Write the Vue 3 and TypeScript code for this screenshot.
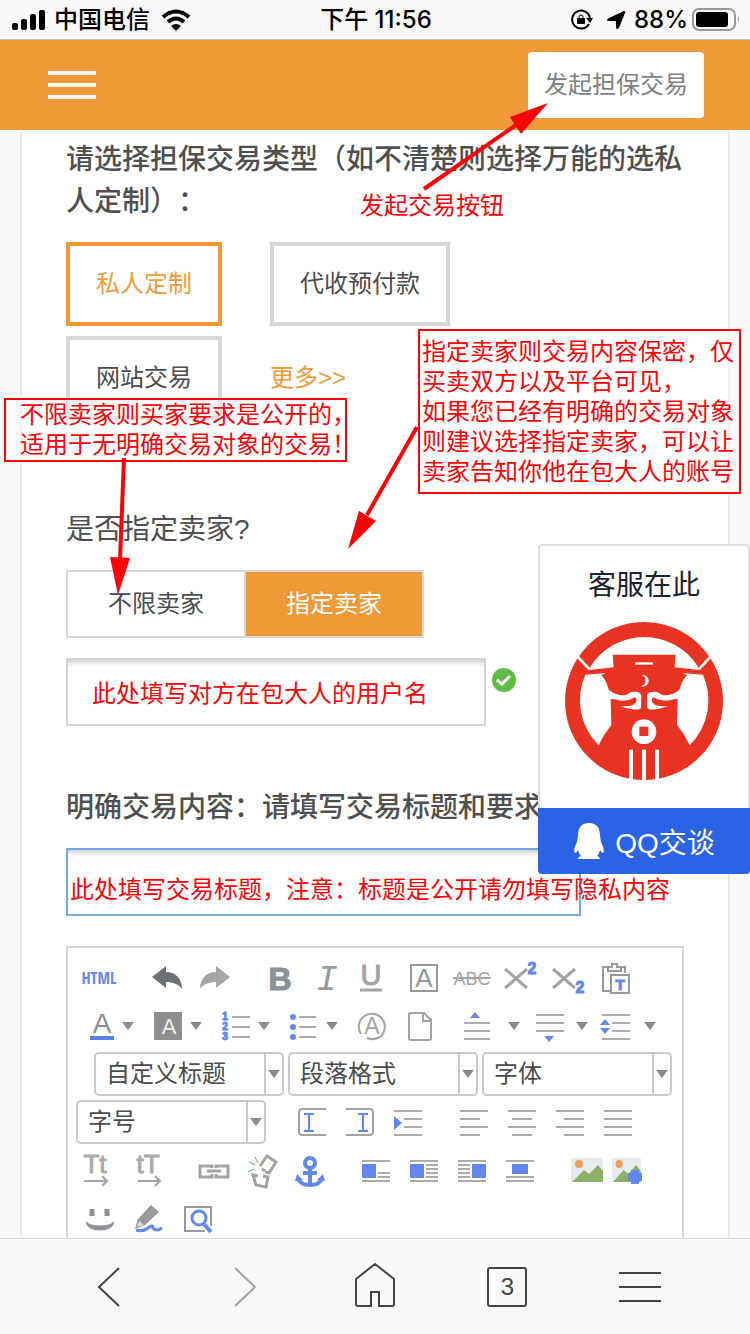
<script setup lang="ts">
import { ref } from 'vue'

interface Tool {
  kind: 'icon' | 'split' | 'select' | 'sep'
  icon?: string
  label?: string
}

const icon = (name: string, label: string): Tool => ({ kind: 'icon', icon: name, label })
const split = (name: string, label: string): Tool => ({ kind: 'split', icon: name, label })
const select = (label: string): Tool => ({ kind: 'select', label })
const sep: Tool = { kind: 'sep' }

const toolRows: Tool[][] = [
  [
    icon('html', '源代码'), sep, icon('undo', '撤销'), icon('redo', '重做'), sep,
    icon('bold', '加粗'), icon('italic', '斜体'), icon('underline', '下划线'), icon('border', '字符边框'),
    icon('strike', '删除线'), icon('sup', '上标'), icon('sub', '下标'), icon('paste', '纯文本粘贴'),
  ],
  [
    split('color', '字体颜色'), split('back', '背景色'), split('ol', '有序列表'), split('ul', '无序列表'),
    icon('clear', '清除格式'), icon('page', '清空文档'), sep,
    split('before', '段前距'), split('after', '段后距'), split('line', '行间距'),
  ],
  [sep, select('自定义标题'), select('段落格式'), select('字体')],
  [
    select('字号'), sep, icon('ltr', '从左向右输入'), icon('rtl', '从右向左输入'), icon('indent', '首行缩进'), sep,
    icon('left', '居左对齐'), icon('center', '居中对齐'), icon('right', '居右对齐'), icon('justify', '两端对齐'),
  ],
  [
    icon('upper', '字母大写'), icon('lower', '字母小写'), sep,
    icon('link', '超链接'), icon('unlink', '取消链接'), icon('anchor', '锚点'), sep,
    icon('imgnone', '默认'), icon('imgleft', '左浮动'), icon('imgright', '右浮动'), icon('imgcenter', '图片居中'), sep,
    icon('image', '单图上传'), icon('images', '多图上传'),
  ],
  [icon('smile', '表情'), icon('scrawl', '涂鸦'), icon('search', '查询替换')],
]

const G = '#a3a3a3'
const B = '#6288ee'
const hl = (y: number, a: number, b: number) => `M${a} ${y}H${b}`
const rules = (d: string) => `<path d="${d}" stroke="#acacac" stroke-width="2" fill="none"/>`
const tx = (s: string, x: number, y: number, size: number, fill: string, extra = '') =>
  `<text x="${x}" y="${y}" font-size="${size}" fill="${fill}" text-anchor="middle" ${extra}>${s}</text>`

const scenery =
  '<path d="M0 0H32V24H0Z" fill="#e6ebf0"/><circle cx="8" cy="6" r="4" fill="#eb9d5c"/><path d="M1 24L13 12L18 16L27 7L32 13V24Z" fill="#8db067"/>'

const icons: Record<string, string> = {
  html: tx('HTML', 23, 30, 16, B, 'class="narrow"'),
  undo: '<path d="M10 23L24 12V18C34 18 40 25 40 35C36 30 31 28 24 28V34Z" fill="#6d7076"/>',
  redo: '<path d="M40 23L26 12V18C16 18 10 25 10 35C14 30 19 28 26 28V34Z" fill="#a5a5a5"/>',
  bold: tx('B', 24, 36, 32, '#8d9096', 'font-weight="700" stroke="#8d9096"'),
  italic: tx('I', 23, 36, 36, '#9b9b9b', 'class="slab" font-style="italic"'),
  underline: tx('U', 19, 31, 29, G, 'stroke="#a3a3a3"') + '<path d="M8 36H30" stroke="#a3a3a3" stroke-width="3"/>',
  border: '<rect x="11" y="11" width="26" height="26" fill="none" stroke="#999" stroke-width="2"/>' + tx('A', 24, 33, 26, '#969696'),
  strike: tx('ABC', 24, 31, 18, G) + '<path d="M5 24H43" stroke="#a3a3a3" stroke-width="2"/>',
  sup: '<path d="M9 15L31 34M31 15L9 34" stroke="#a3a3a3" stroke-width="3"/>' + tx('2', 36, 20, 16, B, 'font-weight="700" stroke="#6288ee"'),
  sub: '<path d="M9 15L31 34M31 15L9 34" stroke="#a3a3a3" stroke-width="3"/>' + tx('2', 36, 39, 16, B, 'font-weight="700" stroke="#6288ee"'),
  paste: `<path d="M17 13H11V37H18M28 13H33V19M16 17H29V13H25V10H20V13H16Z" fill="none" stroke="#999" stroke-width="2"/><rect x="19" y="21" width="18" height="18" fill="#fff" stroke="#999" stroke-width="2"/>${tx('T', 28, 36, 15, B, 'font-weight="700" stroke="#6288ee"')}`,
  color: tx('A', 26, 31, 28, '#8e8e8e') + '<path d="M14 36H38" stroke="#5580ee" stroke-width="4"/>',
  back: '<rect x="10" y="10" width="28" height="28" fill="#8e8e8e"/>' + tx('A', 25, 32, 22, '#eee'),
  ol: tx('1', 13, 18, 10, B, 'font-weight="700" stroke="#6288ee"') + tx('2', 13, 28, 10, B, 'font-weight="700" stroke="#6288ee"') + tx('3', 13, 38, 10, B, 'font-weight="700" stroke="#6288ee"') + rules(hl(15, 20, 38) + hl(25, 20, 38) + hl(35, 20, 38)),
  ul: `<g fill="${B}"><circle cx="13" cy="15" r="3"/><circle cx="13" cy="25" r="3"/><circle cx="13" cy="35" r="3"/></g>` + rules(hl(15, 19, 36) + hl(25, 19, 36) + hl(35, 19, 36)),
  clear: '<path d="M13 32A13 13 0 1 1 33 34M33 34Q27 39 19 36" fill="none" stroke="#a3a3a3" stroke-width="2"/>' + tx('A', 24, 32, 23, G),
  page: '<path d="M15 11H28L35 18V36Q35 38 33 38H15Q13 38 13 36V13Q13 11 15 11ZM27 11V19H35" fill="none" stroke="#a3a3a3" stroke-width="2"/>',
  before: `<path d="M13 10L18 16H8Z" fill="${B}"/>` + rules(hl(21, 2, 28) + hl(29, 2, 28) + hl(37, 2, 28)),
  after: `<path d="M19 40L24 34H14Z" fill="${B}"/>` + rules(hl(13, 6, 34) + hl(21, 6, 34) + hl(29, 6, 34)),
  line: `<path d="M7 17L12 23H2ZM7 32L12 26H2Z" fill="${B}"/>` + rules(hl(13, 4, 32) + hl(21, 14, 32) + hl(29, 14, 32) + hl(37, 4, 32)),
  ltr: `<path d="M38 11H14Q11 11 11 14V34Q11 37 14 37H38" fill="none" stroke="#a3a3a3" stroke-width="2"/><path d="M16 16H26M21 16V33M16 33H26" stroke="${B}" stroke-width="2"/>`,
  rtl: `<path d="M10 11H34Q37 11 37 14V34Q37 37 34 37H10" fill="none" stroke="#a3a3a3" stroke-width="2"/><path d="M22 16H32M27 16V33M22 33H32" stroke="${B}" stroke-width="2"/>`,
  indent: `<path d="M10 18L18 25L10 32Z" fill="${B}"/>` + rules(hl(13, 10, 38) + hl(21, 20, 38) + hl(29, 20, 38) + hl(37, 10, 38)),
  left: rules(hl(13, 10, 38) + hl(21, 10, 30) + hl(29, 10, 38) + hl(37, 10, 30)),
  center: rules(hl(13, 10, 38) + hl(21, 14, 34) + hl(29, 10, 38) + hl(37, 14, 34)),
  right: rules(hl(13, 10, 38) + hl(21, 18, 38) + hl(29, 10, 38) + hl(37, 18, 38)),
  justify: rules(hl(13, 10, 38) + hl(21, 10, 38) + hl(29, 10, 38) + hl(37, 10, 38)),
  upper: tx('Tt', 19, 27, 26, '#aaa', 'stroke="#aaa"') + '<path d="M8 35H31M26 30L31 35L26 40" fill="none" stroke="#a3a3a3" stroke-width="2"/>',
  lower: tx('tT', 24, 27, 26, '#aaa', 'stroke="#aaa"') + '<path d="M14 35H36M31 30L36 35L31 40" fill="none" stroke="#a3a3a3" stroke-width="2"/>',
  link: '<path d="M22 22V20H10V31H22V28M26 22V20H38V31H26V28M17 25H31" fill="none" stroke="#a3a3a3" stroke-width="3"/>',
  unlink: `<g fill="none" stroke="#a3a3a3" stroke-width="3"><path d="M22 20L29 10L38 16L31 27L27 26M24 23L27 25"/><path d="M20 30L15 29L18 39L28 41L30 31L25 30"/></g><path d="M17 11L20 17M11 16L17 19M10 26L16 23" stroke="${B}" stroke-width="1"/>`,
  anchor: `<g fill="none" stroke="${B}" stroke-width="4"><circle cx="24" cy="17" r="5"/><path d="M24 22V39M17 27H31M12 32Q14 39 24 39Q34 39 36 32"/></g><path d="M9 35L11 28L17 34ZM39 35L37 28L31 34Z" fill="${B}"/>`,
  imgnone: `<rect x="10" y="18" width="14" height="14" fill="${B}"/>` + rules(hl(15, 10, 38) + hl(27, 26, 38) + hl(31, 26, 38) + hl(35, 10, 38)),
  imgleft: `<rect x="10" y="18" width="14" height="14" fill="${B}"/>` + rules(hl(15, 10, 38) + hl(19, 26, 38) + hl(23, 26, 38) + hl(27, 26, 38) + hl(31, 26, 38) + hl(35, 10, 38)),
  imgright: `<rect x="24" y="18" width="14" height="14" fill="${B}"/>` + rules(hl(15, 10, 38) + hl(19, 10, 22) + hl(23, 10, 22) + hl(27, 10, 22) + hl(31, 10, 22) + hl(35, 10, 38)),
  imgcenter: `<rect x="16" y="18" width="16" height="10" fill="${B}"/>` + rules(hl(15, 10, 38) + hl(31, 10, 38) + hl(35, 10, 38)),
  image: `<g transform="translate(9 12)">${scenery}</g>`,
  images: `<g transform="translate(2 12) scale(.9 1)">${scenery}</g><path d="M21 24H29V27H32V35H29V38H21V35H18V27H21Z" fill="${B}"/>`,
  smile: '<path d="M16 15V22M31 15V22" stroke="#8e9197" stroke-width="5"/><path d="M10 28Q12 36 24 36Q36 36 38 28Q34 32 24 32Q14 32 10 28Z" fill="#8e9197" stroke="#8e9197"/>',
  scrawl: `<path d="M11 35L14 25L27 11L35 18L21 31Z" fill="#999"/><path d="M13 33L15 27L20 31Z" fill="#ddd"/><path d="M12 36Q19 38 24 34T29 34Q32 38 38 34" fill="none" stroke="${B}" stroke-width="3"/>`,
  search: `<path d="M33 37H13V13H39V32" fill="none" stroke="#999" stroke-width="2"/><circle cx="27" cy="24" r="7" fill="none" stroke="${B}" stroke-width="3"/><path d="M32 30L39 38" stroke="${B}" stroke-width="4"/>`,
}

const types = ['私人定制', '代收预付款', '网站交易']
const activeType = ref('私人定制')
const sellerModes = ['不限卖家', '指定卖家']
const sellerMode = ref('指定卖家')
const sellerName = ref('')
const dealTitle = ref('')
</script>

<template>
  <div class="screen">
    <div class="status">
      <div class="status-left">
        <svg width="34" height="22" viewBox="0 0 34 22">
          <rect x="0" y="14" width="6" height="7" rx="2" /><rect x="9" y="10" width="6" height="11" rx="2" />
          <rect x="18" y="5" width="6" height="16" rx="2" /><rect x="27" y="1" width="6" height="20" rx="2" />
        </svg>
        <span>中国电信</span>
        <svg class="wifi" width="30" height="22" viewBox="0 0 30 22">
          <path d="M2 8Q15 -3 28 8M7 13Q15 6 23 13" fill="none" stroke="#000" stroke-width="4" />
          <path d="M10 17Q15 13 20 17L15 22Z" />
        </svg>
      </div>
      <div class="status-time">下午 11:56</div>
      <div class="status-right">
        <svg width="22" height="22" viewBox="0 0 22 22">
          <path d="M18 15A9 9 0 1 1 19 9" fill="none" stroke="#000" stroke-width="2" />
          <path d="M15 9H22L19 14Z" /><rect x="6" y="9" width="8" height="6" rx="1" />
          <path d="M8 10V8Q8 6 10 6T12 8V10" fill="none" stroke="#000" stroke-width="1" />
        </svg>
        <svg class="locate" width="19" height="20" viewBox="0 0 19 20"><path d="M0 10Q0 9 2 8L17 1Q19 1 18 3L12 18Q10 20 9 18V11L2 11Q0 11 0 10Z" /></svg>
        <span>88%</span>
        <svg class="battery" width="48" height="24" viewBox="0 0 48 24">
          <rect x="1" y="1" width="42" height="21" rx="6" fill="none" stroke="#999" stroke-width="2" />
          <rect x="4" y="4" width="32" height="15" rx="3" /><path d="M46 8Q48 11 46 15Z" fill="#999" />
        </svg>
      </div>
    </div>

    <header class="topbar">
      <button class="burger" type="button" aria-label="菜单"><i></i><i></i><i></i></button>
      <button class="launch" type="button">发起担保交易</button>
    </header>

    <main class="viewport">
      <form class="card" @submit.prevent>
        <h2 class="heading">请选择担保交易类型（如不清楚则选择万能的选私人定制）：</h2>
        <div class="types">
          <button
            v-for="t in types" :key="t" type="button" class="type"
            :class="{ active: t === activeType }" @click="activeType = t"
          >{{ t }}</button>
          <a class="more" href="#">更多&gt;&gt;</a>
        </div>

        <h2 class="heading question">是否指定卖家?</h2>
        <div class="segment">
          <button
            v-for="m in sellerModes" :key="m" type="button"
            :class="{ active: m === sellerMode }" @click="sellerMode = m"
          >{{ m }}</button>
        </div>
        <div class="seller-row">
          <input v-model="sellerName" class="field seller" type="text" aria-label="卖家用户名">
          <svg class="ok" width="24" height="24" viewBox="0 0 24 24">
            <circle cx="12" cy="12" r="12" fill="#5fba46" />
            <path d="M5 12L10 16L18 8" fill="none" stroke="#fff" stroke-width="3" />
          </svg>
        </div>

        <label class="heading content-title" for="deal-title">明确交易内容：请填写交易标题和要求</label>
        <input id="deal-title" v-model="dealTitle" class="field title" type="text">

        <div class="editor">
          <div v-for="(row, r) in toolRows" :key="r" class="tools">
            <template v-for="(tool, c) in row" :key="c">
              <span v-if="tool.kind === 'sep'" class="sep"></span>
              <label v-else-if="tool.kind === 'select'" class="picker">
                <select :aria-label="tool.label"><option>{{ tool.label }}</option></select>
                <span class="drop"><i class="caret"></i></span>
              </label>
              <button v-else type="button" class="tool" :class="{ split: tool.kind === 'split' }" :aria-label="tool.label">
                <svg width="48" height="48" viewBox="0 0 48 48" v-html="icons[tool.icon!]"></svg>
                <i v-if="tool.kind === 'split'" class="caret"></i>
              </button>
            </template>
          </div>
        </div>
      </form>
    </main>

    <nav class="dock">
      <button type="button" aria-label="后退">
        <svg width="44" height="48" viewBox="0 0 44 48"><path d="M31 5L11 24L31 43" /></svg>
      </button>
      <button type="button" aria-label="前进" class="dim">
        <svg width="44" height="48" viewBox="0 0 44 48"><path d="M14 5L34 24L14 43" /></svg>
      </button>
      <button type="button" aria-label="主页">
        <svg width="44" height="48" viewBox="0 0 44 48"><path d="M3 16L22 1L41 16V41Q41 43 39 43H26V29H18V43H5Q3 43 3 41Z" /></svg>
      </button>
      <button type="button" aria-label="标签页"><span class="tabs">3</span></button>
      <button type="button" aria-label="更多">
        <svg width="44" height="48" viewBox="0 0 44 48"><path d="M1 10H43M1 24H43M1 38H43" /></svg>
      </button>
    </nav>

    <div class="notes">
      <p class="note launch-note">发起交易按钮</p>
      <p class="note boxed open-note">不限卖家则买家要求是公开的，<br>适用于无明确交易对象的交易！</p>
      <p class="note boxed named-note">指定卖家则交易内容保密，仅<br>买卖双方以及平台可见，<br>如果您已经有明确的交易对象<br>则建议选择指定卖家，可以让<br>卖家告知你他在包大人的账号</p>
      <p class="note name-note">此处填写对方在包大人的用户名</p>
      <p class="note title-note">此处填写交易标题，注意：标题是公开请勿填写隐私内容</p>
      <svg class="arrows" width="750" height="620" viewBox="0 0 750 620">
        <g stroke="#fb0207" stroke-width="4"><path d="M424 189L516 125" /><path d="M124 458L120 560" /><path d="M417 427L367 515" /></g>
        <g fill="#fb0207"><path d="M548 103L510 117L521 134Z" /><path d="M118 595L110 557L130 558Z" /><path d="M348 549L359 511L376 521Z" /></g>
      </svg>
    </div>

    <aside class="chat">
      <div class="chat-body">
        <div class="chat-title">客服在此</div>
        <svg width="160" height="160" viewBox="42 34 480 480">
          <defs>
            <g id="half">
              <path d="M106 195L168 190L153 197C165 205 172 225 177 242L182 268L184 345Q160 375 146 407A190 190 0 0 1 106 195Z" />
              <path d="M176 240C200 258 225 262 238 250C250 243 272 245 274 258L273 295C268 303 235 300 211 289C230 291 245 290 252 284C262 276 262 266 254 263C240 272 220 276 200 270Q188 266 181 269Z" />
              <path d="M81 139L119 179" stroke="#fff" stroke-width="8" />
            </g>
          </defs>
          <circle cx="282" cy="274" r="237" fill="#e83323" />
          <g fill="#fff">
            <path d="M122 170A190 190 0 0 1 443 170L447 181L374 173L377 135H188L191 173L118 181Z" />
            <use href="#half" />
            <use href="#half" transform="matrix(-1 0 0 1 565 0)" />
            <rect x="255" y="158" width="54" height="7" />
            <path d="M275 195C304 195 304 235 270 230C291 228 292 202 275 195Z" />
            <circle cx="282" cy="366" r="37" />
            <rect x="237" y="420" width="12" height="96" /><rect x="276" y="420" width="12" height="96" /><rect x="315" y="420" width="12" height="96" />
          </g>
          <rect x="268" y="351" width="27" height="28" fill="#e83323" />
        </svg>
      </div>
      <button class="chat-button" type="button">
        <svg width="32" height="38" viewBox="0 0 32 38">
          <path d="M16 1C8 1 5 6 5 14L4 20Q1 25 1 30L3 31L5 28Q6 32 8 34Q5 35 5 37H27Q27 35 24 34Q26 32 27 28L29 31L31 30Q31 25 28 20L27 14C27 6 24 1 16 1Z" fill="#fff" />
        </svg>
        QQ交谈
      </button>
    </aside>
  </div>
</template>

<style>
body {
  margin: 0;
  background: #fafafa;
}
</style>

<style scoped>
.screen {
  position: relative;
  display: flex;
  flex-direction: column;
  height: 100vh;
  overflow: hidden;
  color: #4b4b4b;
  font-family: "Liberation Sans", "Noto Sans CJK SC", sans-serif;
  font-size: 24px;
}
button {
  padding: 0;
  border: 0;
  background: none;
  color: inherit;
  font: inherit;
  cursor: pointer;
}
svg {
  display: block;
  flex: none;
}

.status {
  display: grid;
  grid-template-columns: 1fr auto 1fr;
  align-items: center;
  flex: none;
  height: 39px;
  padding: 0 10px 0 12px;
  border-bottom: 1px solid #c4c4c8;
  background: #f9f9f9;
  color: #000;
  font-family: Inter, "Noto Sans CJK SC", sans-serif;
  font-weight: 500;
  line-height: 36px;
}
.status-left,
.status-right {
  display: flex;
  align-items: center;
}
.status-left {
  gap: 8px;
}
.wifi {
  margin-left: 3px;
}
.status-right {
  justify-content: flex-end;
}
.locate {
  margin: 0 8px 0 14px;
}
.battery {
  margin-left: 4px;
}

.topbar {
  display: flex;
  align-items: center;
  justify-content: space-between;
  flex: none;
  height: 90px;
  padding: 0 46px 0 48px;
  background: #ef9a36;
}
.burger {
  display: flex;
  flex-direction: column;
  gap: 8px;
  width: 48px;
}
.burger i {
  height: 4px;
  background: #fff;
}
.launch {
  padding: 0 16px;
  border-radius: 4px;
  background: #fff;
  color: #808080;
  line-height: 66px;
}

.viewport {
  flex: 1;
  min-height: 0;
  overflow: hidden;
}
.card {
  margin: 0 20px;
  padding: 9px 44px 0;
  border: solid #ebebeb;
  border-width: 0 2px;
  background: #fff;
}
.heading {
  display: block;
  margin: 0;
  color: #4f4f4f;
  font-size: 28px;
  font-weight: 500;
  line-height: 42px;
  text-spacing-trim: space-all;
}
.types {
  display: flex;
  flex-wrap: wrap;
  row-gap: 10px;
  margin-top: 19px;
  line-height: 76px;
}
.type {
  height: 84px;
  margin-right: 48px;
  padding: 0 26px;
  border: 4px solid #d8d8d8;
}
.type.active {
  border-color: #ef9a36;
  color: #ef9a36;
}
.more {
  color: #ef9a36;
  line-height: 84px;
  text-decoration: none;
}
.question {
  margin-top: 89px;
  font-weight: 400;
}
.segment {
  display: flex;
  width: 354px;
  margin: 19px 0 20px;
  border: 2px solid #d8d8d8;
}
.segment button {
  flex: 1;
  line-height: 64px;
}
.segment button + button {
  border-left: 2px solid #d8d8d8;
}
.segment .active {
  background: #ef9a36;
  color: #fff;
}
.seller-row {
  display: flex;
  align-items: flex-start;
  gap: 6px;
}
.ok {
  margin-top: 10px;
}
.field {
  display: block;
  box-sizing: border-box;
  height: 68px;
  padding: 0 24px;
  border: 2px solid #d4d4d4;
  border-radius: 0;
  background: #fff;
  box-shadow: inset 0 6px 4px -3px #d0d0d0;
  color: inherit;
  font: inherit;
  outline: 0;
}
.seller {
  width: 68%;
}
.content-title {
  margin: 61px 0 19px;
}
.title {
  width: 515px;
  max-width: 100%;
  border-color: #74aae4;
}
.editor {
  margin-top: 30px;
  padding: 6px 8px 40px;
  border: 2px solid #d4d4d4;
}
.tools {
  display: flex;
  align-items: center;
  height: 48px;
}
.tool {
  display: flex;
  align-items: center;
  flex: none;
}
.tool svg {
  overflow: visible;
}
.tool :deep(.narrow) {
  font-family: "Liberation Sans Narrow", "Open Sans Condensed", "DejaVu Sans Condensed", sans-serif;
}
.tool :deep(.slab) {
  font-family: "Liberation Mono", monospace;
}
.split {
  width: 68px;
}
.split .caret {
  margin-left: -2px;
}
.caret {
  flex: none;
  width: 0;
  border: solid transparent;
  border-width: 8px 6px 0;
  border-top-color: #8a8a8a;
}
.sep {
  flex: none;
  width: 18px;
}
.picker {
  display: flex;
  box-sizing: border-box;
  width: 190px;
  height: 44px;
  border: 2px solid #c9c9c9;
  border-radius: 5px;
}
.picker + .picker {
  margin-left: 4px;
}
.picker + .sep {
  width: 22px;
}
.picker select {
  flex: 1;
  min-width: 0;
  padding: 0 10px 2px;
  border: 0;
  appearance: none;
  background: none;
  color: #4b4b4b;
  font: inherit;
  outline: 0;
}
.drop {
  display: flex;
  align-items: center;
  justify-content: center;
  width: 16px;
  border-left: 2px solid #c9c9c9;
}

.dock {
  display: flex;
  flex: none;
  height: 95px;
  padding: 0 44px;
  border-top: 1px solid #d9d9d9;
  background: #f9f9f9;
}
.dock button {
  display: flex;
  align-items: center;
  justify-content: center;
  flex: 1;
}
.dock svg {
  fill: none;
  stroke: #444;
  stroke-width: 2px;
}
.dock .dim svg {
  stroke: #a3a3a3;
}
.tabs {
  width: 36px;
  border: 2px solid #444;
  border-radius: 3px;
  color: #444;
  line-height: 36px;
}

.notes {
  position: absolute;
  inset: 0;
  pointer-events: none;
}
.note {
  position: absolute;
  margin: 0;
  color: #fb0207;
  line-height: 30px;
  white-space: nowrap;
}
.boxed {
  box-sizing: border-box;
  border: 2px solid #fb0207;
  background: rgba(255, 255, 255, 0.3);
}
.launch-note {
  top: 191px;
  left: 360px;
}
.open-note {
  top: 398px;
  left: 4px;
  width: 343px;
  padding: 0 0 0 14px;
}
.named-note {
  top: 329px;
  left: 418px;
  width: 323px;
  padding: 6px 2px 5px;
}
.name-note {
  top: 679px;
  left: 92px;
}
.title-note {
  top: 875px;
  left: 70px;
}
.arrows {
  position: absolute;
  top: 0;
  left: 0;
}

.chat {
  position: absolute;
  top: 544px;
  right: 0;
  width: 212px;
}
.chat-body {
  display: flex;
  flex-direction: column;
  align-items: center;
  padding: 19px 0 27px;
  border: 2px solid #dcdfe6;
  border-bottom: 0;
  border-radius: 4px 4px 0 0;
  background: #fff;
}
.chat-title {
  margin-bottom: 14px;
  color: #1d2230;
  font-size: 28px;
  line-height: 42px;
}
.chat-button {
  display: flex;
  align-items: center;
  justify-content: center;
  gap: 10px;
  width: 100%;
  height: 66px;
  border-radius: 0 0 4px 4px;
  background: #2a64e4;
  color: #fff;
  font-size: 28px;
}
</style>
